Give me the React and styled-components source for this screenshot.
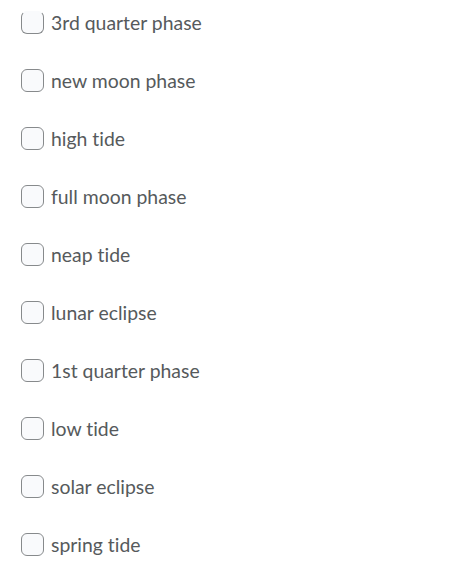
import React from 'react'
import styled, { createGlobalStyle } from 'styled-components'

const GlobalStyle = createGlobalStyle`
  body {
    margin: 0;
    background: #ffffff;
    font-family: Lato, 'Liberation Sans', sans-serif;
  }
`

const List = styled.div`
  display: flex;
  flex-direction: column;
  gap: 35px;
  padding: 11px 0 0 21px;
`

const Row = styled.label`
  display: flex;
  align-items: center;
  gap: 7px;
  height: 23px;
`

const Box = styled.span`
  box-sizing: border-box;
  width: 23px;
  height: 23px;
  border: 1px solid #878a8c;
  border-top-color: ${props => props.cut ? 'transparent' : '#878a8c'};
  border-radius: 6px;
  background: #f9fafc;
  flex: none;
`

const Label = styled.span`
  font-size: 19.4px;
  color: #565a5c;
  line-height: 23px;
  font-variant-ligatures: none;
`

const options = [
  '3rd quarter phase',
  'new moon phase',
  'high tide',
  'full moon phase',
  'neap tide',
  'lunar eclipse',
  '1st quarter phase',
  'low tide',
  'solar eclipse',
  'spring tide'
]

const App = () => (
  <>
    <GlobalStyle />
    <List>
      {options.map((o, i) => (
        <Row key={o}>
          <Box cut={i === 0} />
          <Label>{o}</Label>
        </Row>
      ))}
    </List>
  </>
)

export default App
